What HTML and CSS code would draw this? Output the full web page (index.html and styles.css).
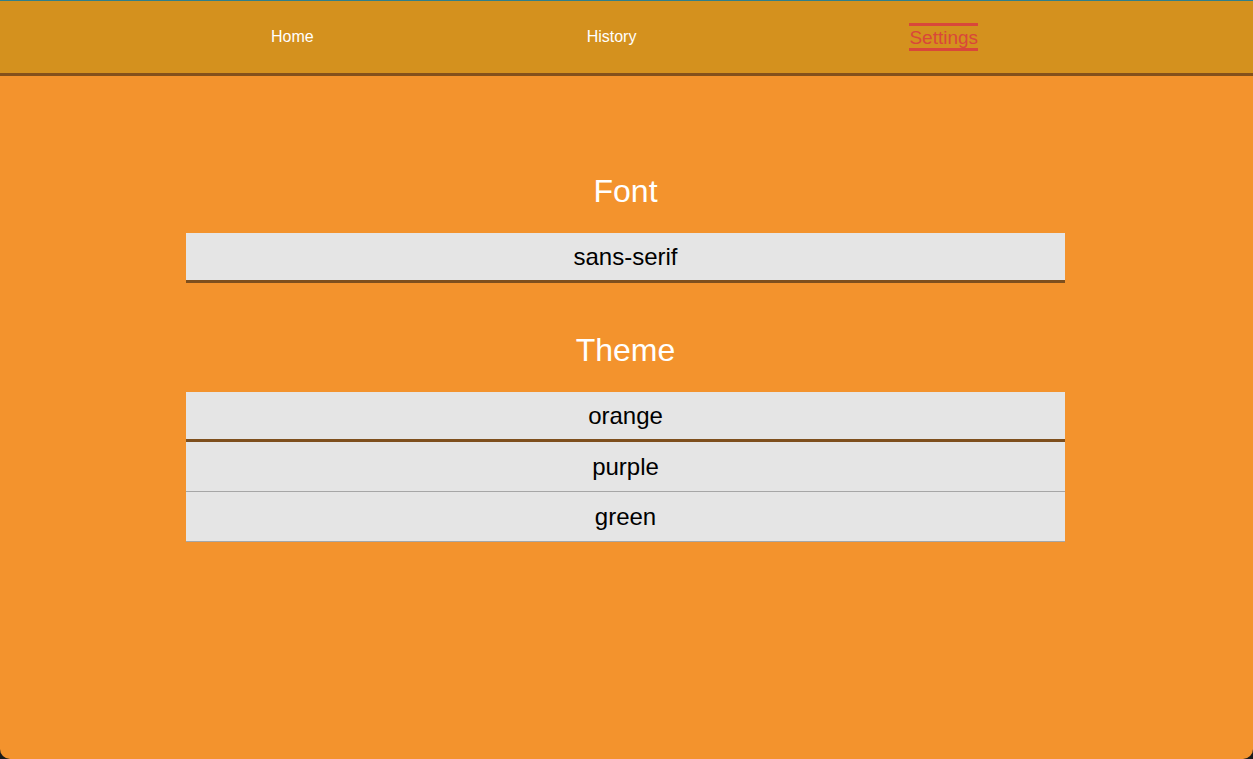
FILE: index.html
```html
<!DOCTYPE html>
<html lang="en">
<head>
<meta charset="utf-8">
<title>Settings</title>
<link rel="stylesheet" href="styles.css">
</head>
<body>
<div class="app">
  <header class="topbar">
    <nav class="nav">
      <a class="nav-link" href="#">Home</a>
      <a class="nav-link" href="#">History</a>
      <a class="nav-link active" href="#">Settings</a>
    </nav>
  </header>
  <main class="content">
    <section class="group">
      <h2 class="group-title">Font</h2>
      <ul class="options">
        <li class="option selected">sans-serif</li>
      </ul>
    </section>
    <section class="group">
      <h2 class="group-title">Theme</h2>
      <ul class="options">
        <li class="option selected">orange</li>
        <li class="option">purple</li>
        <li class="option">green</li>
      </ul>
    </section>
  </main>
</div>
</body>
</html>
```
FILE: styles.css
```css
html, body {
  margin: 0;
  padding: 0;
  height: 100%;
  background: #1b1b1b;
}
body {
  font-family: "Liberation Sans", Arial, Helvetica, sans-serif;
}
.app {
  height: 759px;
  box-sizing: border-box;
  display: flex;
  flex-direction: column;
  background: #f3932d;
  border-top: 1px solid #2f7f8a;
  border-radius: 0 0 10px 10px;
  overflow: hidden;
}
.topbar {
  height: 75px;
  box-sizing: border-box;
  background: #d4911e;
  border-bottom: 3px solid #83501b;
  display: flex;
  align-items: center;
}
.nav {
  width: 100%;
  display: flex;
  justify-content: center;
  align-items: center;
  gap: 273px;
  padding-right: 4px;
  box-sizing: border-box;
}
.nav-link {
  color: #ffffff;
  text-decoration: none;
  font-size: 16px;
  line-height: 18px;
}
.nav-link.active {
  color: #d9473a;
  font-size: 19px;
  line-height: 21px;
  border-top: 3px solid #d9473a;
  border-bottom: 3px solid #d9473a;
  padding: 1px 0 0;
}
.content {
  padding-top: 97px;
  display: flex;
  flex-direction: column;
  align-items: center;
  gap: 49px;
}
.group {
  width: 879px;
  margin-left: -2px;
  display: flex;
  flex-direction: column;
}
.group-title {
  margin: 0 0 24px;
  font-size: 32px;
  line-height: 36px;
  font-weight: normal;
  color: #ffffff;
  text-align: center;
}
.options {
  list-style: none;
  margin: 0;
  padding: 0;
}
.option {
  height: 50px;
  box-sizing: border-box;
  background: #e5e5e5;
  border-bottom: 1px solid #a6a6a6;
  display: flex;
  align-items: center;
  justify-content: center;
  font-size: 24px;
  color: #000000;
}
.option.selected {
  border-bottom: 3px solid #7e4f1d;
}
```
